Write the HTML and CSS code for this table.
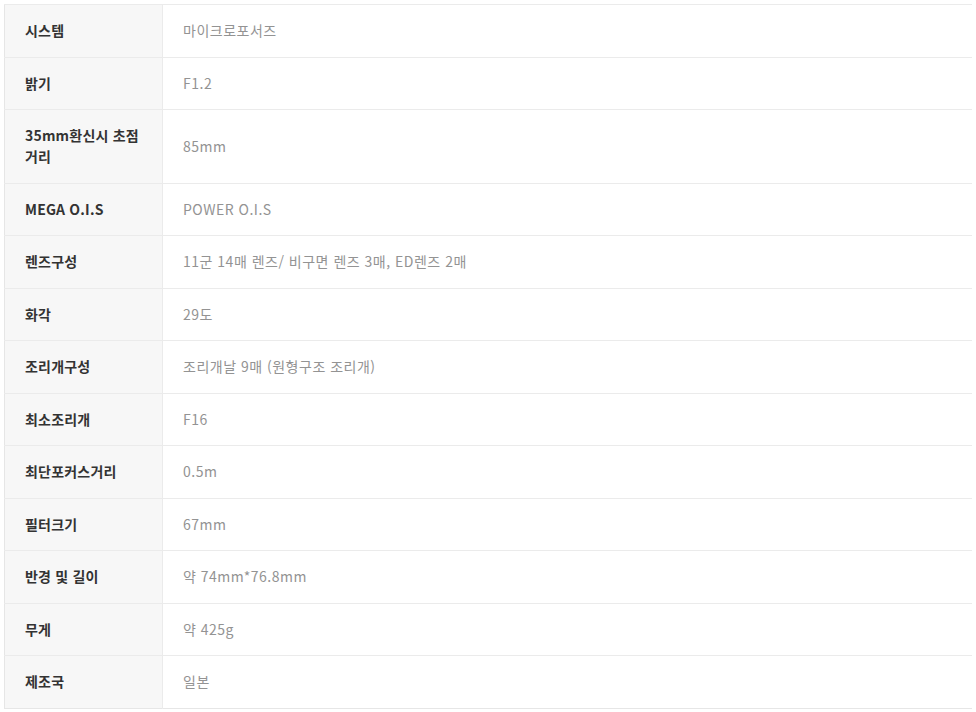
FILE: index.html
```html
<!DOCTYPE html>
<html lang="ko">
<head>
  <meta charset="UTF-8" />
  <meta name="viewport" content="width=device-width, initial-scale=1.0"/>
  <title>제품 사양</title>
  <link rel="stylesheet" href="styles.css">
</head>
<body>
  <table class="spec-table">
    <tbody>
      <tr><th>시스템</th><td>마이크로포서즈</td></tr>
      <tr><th>밝기</th><td>F1.2</td></tr>
      <tr><th>35mm환신시 초점<br>거리</th><td>85mm</td></tr>
      <tr><th>MEGA O.I.S</th><td>POWER O.I.S</td></tr>
      <tr><th>렌즈구성</th><td>11군 14매 렌즈/ 비구면 렌즈 3매, ED렌즈 2매</td></tr>
      <tr><th>화각</th><td>29도</td></tr>
      <tr><th>조리개구성</th><td>조리개날 9매 (원형구조 조리개)</td></tr>
      <tr><th>최소조리개</th><td>F16</td></tr>
      <tr><th>최단포커스거리</th><td>0.5m</td></tr>
      <tr><th>필터크기</th><td>67mm</td></tr>
      <tr><th>반경 및 길이</th><td>약 74mm*76.8mm</td></tr>
      <tr><th>무게</th><td>약 425g</td></tr>
      <tr><th>제조국</th><td>일본</td></tr>
    </tbody>
  </table>
</body>
</html>
```

FILE: styles.css
```css
body {
  margin: 4px;
  font-family: "Noto Sans CJK KR", "Noto Sans", sans-serif;
  font-size: 14px;
  background: white;
}
.spec-table {
  width: 969px;
  border-collapse: collapse;
  border: 1px solid #e6e6e6;
}
.spec-table th,
.spec-table td {
  border-top: 1px solid #ebebeb;
  padding: 15.25px 20px;
  line-height: 21px;
  text-align: left;
  vertical-align: middle;
}
.spec-table th {
  width: 117px;
  background-color: #f7f7f7;
  border-right: 1px solid #ebebeb;
  color: #333;
  font-weight: bold;
  letter-spacing: 0.2px;
}
.spec-table td {
  color: #939393;
  font-weight: normal;
  letter-spacing: 0.5px;
}
```
